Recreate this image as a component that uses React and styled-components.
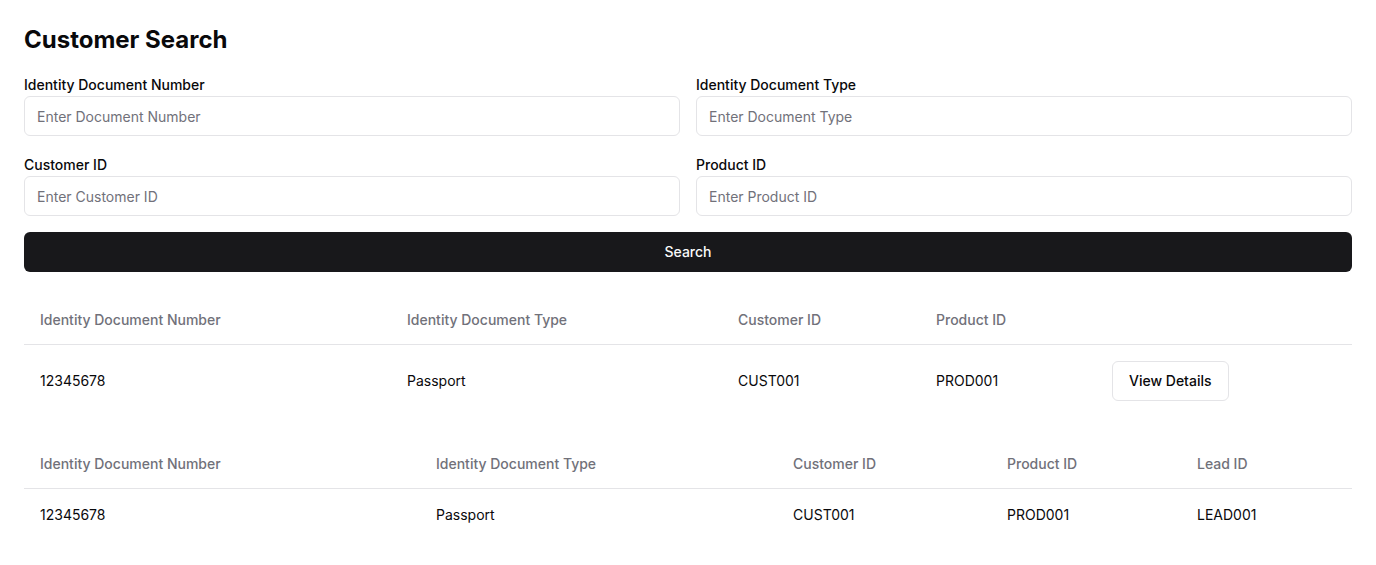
import React from "react";
import styled, { createGlobalStyle } from "styled-components";

const Global = createGlobalStyle`
  * { box-sizing: border-box; }
  body {
    margin: 0;
    background: #ffffff;
    color: #09090b;
    font-family: Inter, "Noto Sans", sans-serif;
    -webkit-font-smoothing: antialiased;
  }
`;

const Page = styled.div`
  padding: 24px;
`;

const Title = styled.h1`
  margin: 0 0 19px;
  font-size: 24px;
  line-height: 32px;
  font-weight: 700;
`;

const FormGrid = styled.div`
  display: grid;
  grid-template-columns: 1fr 1fr;
  column-gap: 16px;
  row-gap: 19px;
`;

const Field = styled.div`
  display: flex;
  flex-direction: column;
`;

const Label = styled.label`
  font-size: 14px;
  line-height: 20px;
  font-weight: 500;
  margin-bottom: 1px;
`;

const Input = styled.input`
  height: 40px;
  width: 100%;
  border: 1px solid #e4e4e7;
  border-radius: 6px;
  padding: 0 12px;
  font-family: inherit;
  font-size: 14px;
  color: #09090b;
  background: #fff;
  outline: none;
  &::placeholder { color: #71717a; }
`;

const PrimaryButton = styled.button`
  margin-top: 16px;
  width: 100%;
  height: 40px;
  padding: 0 0 1px;
  border: none;
  border-radius: 6px;
  background: #18181b;
  color: #fafafa;
  font-family: inherit;
  font-size: 14px;
  font-weight: 500;
  cursor: pointer;
`;

const Table = styled.table`
  width: 100%;
  border-collapse: collapse;
  margin-top: ${(p) => p.$mt}px;
  font-size: 14px;
  table-layout: fixed;
`;

const Th = styled.th`
  height: 48px;
  padding: 0 16px;
  text-align: left;
  font-weight: 500;
  color: #71717a;
  border-bottom: 1px solid #e4e4e7;
  line-height: 20px;
`;

const Td = styled.td`
  padding: 16px;
  line-height: 20px;
  vertical-align: middle;
`;

const OutlineButton = styled.button`
  height: 40px;
  padding: 0 16px;
  border: 1px solid #e4e4e7;
  border-radius: 6px;
  background: #fff;
  color: #09090b;
  font-family: inherit;
  font-size: 14px;
  font-weight: 500;
  cursor: pointer;
`;

const fields = [
  ["Identity Document Number", "Enter Document Number"],
  ["Identity Document Type", "Enter Document Type"],
  ["Customer ID", "Enter Customer ID"],
  ["Product ID", "Enter Product ID"],
];

export default function App() {
  return (
    <Page>
      <Global />
      <Title>Customer Search</Title>
      <FormGrid>
        {fields.map(([label, ph]) => (
          <Field key={label}>
            <Label>{label}</Label>
            <Input placeholder={ph} />
          </Field>
        ))}
      </FormGrid>
      <PrimaryButton>Search</PrimaryButton>

      <Table $mt={24}>
        <colgroup>
          <col style={{ width: 367 }} />
          <col style={{ width: 331 }} />
          <col style={{ width: 198 }} />
          <col style={{ width: 176 }} />
          <col />
        </colgroup>
        <thead>
          <tr>
            <Th>Identity Document Number</Th>
            <Th>Identity Document Type</Th>
            <Th>Customer ID</Th>
            <Th>Product ID</Th>
            <Th></Th>
          </tr>
        </thead>
        <tbody>
          <tr>
            <Td>12345678</Td>
            <Td>Passport</Td>
            <Td>CUST001</Td>
            <Td>PROD001</Td>
            <Td>
              <OutlineButton>View Details</OutlineButton>
            </Td>
          </tr>
        </tbody>
      </Table>

      <Table $mt={24}>
        <colgroup>
          <col style={{ width: 396 }} />
          <col style={{ width: 357 }} />
          <col style={{ width: 214 }} />
          <col style={{ width: 190 }} />
          <col />
        </colgroup>
        <thead>
          <tr>
            <Th>Identity Document Number</Th>
            <Th>Identity Document Type</Th>
            <Th>Customer ID</Th>
            <Th>Product ID</Th>
            <Th>Lead ID</Th>
          </tr>
        </thead>
        <tbody>
          <tr>
            <Td>12345678</Td>
            <Td>Passport</Td>
            <Td>CUST001</Td>
            <Td>PROD001</Td>
            <Td>LEAD001</Td>
          </tr>
        </tbody>
      </Table>
    </Page>
  );
}
